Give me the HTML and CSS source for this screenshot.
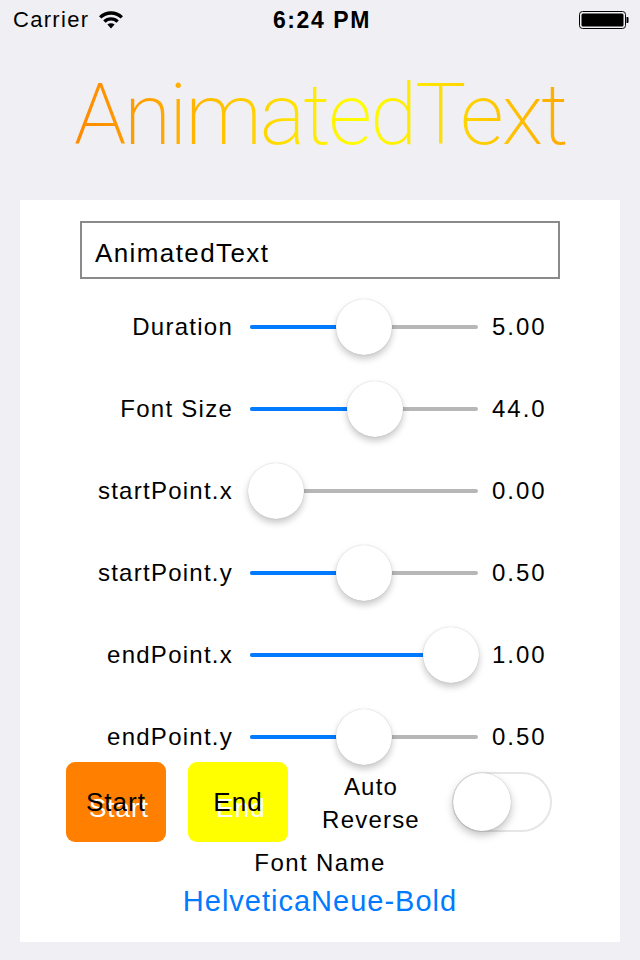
FILE: index.html
```html
<!DOCTYPE html>
<html>
<head>
<meta charset="utf-8">
<link rel="stylesheet" href="styles.css">
</head>
<body>
<div class="screen">
  <div class="status">
    <div class="status-left">
      <span class="carrier">Carrier</span>
      <svg class="wifi" width="26" height="19" viewBox="0 0 26 19">
        <path d="M1 6.2 A17 17 0 0 1 25 6.2 L22.6 8.6 A13.6 13.6 0 0 0 3.4 8.6 Z" fill="#000"/>
        <path d="M5.2 10.4 A11 11 0 0 1 20.8 10.4 L18.4 12.8 A7.6 7.6 0 0 0 7.6 12.8 Z" fill="#000"/>
        <path d="M9.4 14.6 A5.2 5.2 0 0 1 16.6 14.6 L13 18.4 Z" fill="#000"/>
      </svg>
    </div>
    <div class="time">6:24 PM</div>
    <div class="status-right">
      <svg class="battery" width="50" height="18" viewBox="0 0 50 18">
        <rect x="0.5" y="0.5" width="46" height="17" rx="3" ry="3" fill="none" stroke="#000" stroke-width="1"/>
        <rect x="2.5" y="2.5" width="42" height="13" rx="1.5" ry="1.5" fill="#000"/>
        <path d="M47.5 6 h1 a1 1 0 0 1 1 1 v4 a1 1 0 0 1 -1 1 h-1 Z" fill="#000"/>
      </svg>
    </div>
  </div>

  <div class="title-wrap">
    <h1 class="title">AnimatedText</h1>
  </div>

  <div class="panel">
    <div class="field">AnimatedText</div>

    <div class="sliders">
      <div class="row">
        <span class="label">Duration</span>
        <div class="track" style="--f:0.5"><div class="fill"></div><div class="thumb"></div></div>
        <span class="value">5.00</span>
      </div>
      <div class="row">
        <span class="label">Font Size</span>
        <div class="track" style="--f:0.565"><div class="fill"></div><div class="thumb"></div></div>
        <span class="value">44.0</span>
      </div>
      <div class="row">
        <span class="label">startPoint.x</span>
        <div class="track" style="--f:0"><div class="fill"></div><div class="thumb"></div></div>
        <span class="value">0.00</span>
      </div>
      <div class="row">
        <span class="label">startPoint.y</span>
        <div class="track" style="--f:0.5"><div class="fill"></div><div class="thumb"></div></div>
        <span class="value">0.50</span>
      </div>
      <div class="row">
        <span class="label">endPoint.x</span>
        <div class="track" style="--f:1"><div class="fill"></div><div class="thumb"></div></div>
        <span class="value">1.00</span>
      </div>
      <div class="row">
        <span class="label">endPoint.y</span>
        <div class="track" style="--f:0.5"><div class="fill"></div><div class="thumb"></div></div>
        <span class="value">0.50</span>
      </div>
    </div>

    <div class="controls">
      <div class="btn btn-start">Start</div>
      <div class="btn btn-end">End</div>
      <div class="auto">Auto<br>Reverse</div>
      <div class="switch"><div class="knob"></div></div>
    </div>

    <div class="font-label">Font Name</div>
    <div class="font-value">HelveticaNeue-Bold</div>
  </div>
</div>
</body>
</html>
```

FILE: styles.css
```css
html, body {
  margin: 0;
  padding: 0;
}
body {
  background: #efeff4;
  font-family: "Liberation Sans", Arial, sans-serif;
  color: #000;
}
.screen {
  width: 640px;
  height: 960px;
  overflow: hidden;
}
.status {
  height: 40px;
  display: flex;
  align-items: center;
  justify-content: space-between;
  padding: 0 11px 0 13px;
}
.status-left {
  display: flex;
  align-items: center;
  gap: 9px;
  width: 150px;
}
.carrier {
  font-size: 22px;
  line-height: 1;
  letter-spacing: 1.3px;
}
.wifi {
  margin-top: -2px;
}
.time {
  font-size: 23px;
  font-weight: bold;
  line-height: 1;
  letter-spacing: 1.6px;
  margin-left: 2px;
}
.status-right {
  width: 150px;
  display: flex;
  justify-content: flex-end;
}
.title-wrap {
  height: 160px;
  display: flex;
  justify-content: center;
}
.title {
  margin: 32px 0 0 0;
  font-family: Roboto, sans-serif;
  font-weight: 200;
  font-size: 86px;
  line-height: 1;
  letter-spacing: -2.2px;
  background: linear-gradient(90deg, #ff8800 0%, #ffa800 18%, #ffd400 38%, #ffff00 58%, #ffe400 72%, #ffaa00 100%);
  -webkit-background-clip: text;
  background-clip: text;
  color: transparent;
}
.panel {
  margin: 0 20px;
  height: 742px;
  background: #fff;
  padding-top: 21px;
  box-sizing: border-box;
}
.field {
  width: 480px;
  height: 58px;
  margin-left: 60px;
  box-sizing: border-box;
  border: 2px solid #8a8a8a;
  font-size: 26px;
  line-height: 60px;
  padding-left: 13px;
  letter-spacing: 1.4px;
}
.sliders {
  margin-top: 23px;
  display: flex;
  flex-direction: column;
  gap: 32px;
}
.row {
  height: 50px;
  display: flex;
  align-items: center;
}
.label {
  width: 213px;
  text-align: right;
  font-size: 24px;
  letter-spacing: 1.25px;
}
.track {
  position: relative;
  margin-left: 17px;
  width: 228px;
  height: 4px;
  border-radius: 2px;
  background: #b7b7b7;
}
.fill {
  position: absolute;
  left: 0;
  top: 0;
  height: 4px;
  border-radius: 2px;
  background: #007aff;
  width: calc(26px + var(--f) * 175px);
}
.thumb {
  position: absolute;
  top: -26px;
  left: calc(-2px + var(--f) * 175px);
  width: 56px;
  height: 56px;
  border-radius: 50%;
  background: #fff;
  box-shadow: 0 4px 7px rgba(0,0,0,0.22), 0 0 1px rgba(0,0,0,0.25);
}
.value {
  margin-left: 14px;
  font-size: 24px;
  letter-spacing: 2px;
}
.controls {
  height: 80px;
  display: flex;
  align-items: center;
  padding-left: 46px;
}
.btn {
  width: 100px;
  height: 80px;
  border-radius: 9px;
  display: flex;
  align-items: center;
  justify-content: center;
  font-size: 26px;
  letter-spacing: 1px;
  text-shadow: 3px 6px 0 #fff;
}
.btn-start {
  background: #ff8000;
}
.btn-end {
  background: #ffff00;
  margin-left: 22px;
}
.auto {
  width: 142px;
  margin-left: 12px;
  text-align: center;
  font-size: 24px;
  line-height: 33px;
  letter-spacing: 1.2px;
  padding-top: 2px;
}
.switch {
  margin-left: 10px;
  width: 100px;
  height: 60px;
  box-sizing: border-box;
  border: 2px solid #e6e6e6;
  border-radius: 30px;
  position: relative;
}
.knob {
  position: absolute;
  left: -1px;
  top: -1px;
  width: 58px;
  height: 58px;
  border-radius: 50%;
  background: #fff;
  box-shadow: 0 4px 8px rgba(0,0,0,0.25), 0 0 1px rgba(0,0,0,0.3);
}
.font-label {
  margin-top: 6px;
  text-align: center;
  font-size: 24px;
  line-height: 30px;
  letter-spacing: 1.4px;
}
.font-value {
  text-align: center;
  font-size: 29px;
  line-height: 38px;
  margin-top: 4px;
  color: #007aff;
  letter-spacing: 1px;
}
```
